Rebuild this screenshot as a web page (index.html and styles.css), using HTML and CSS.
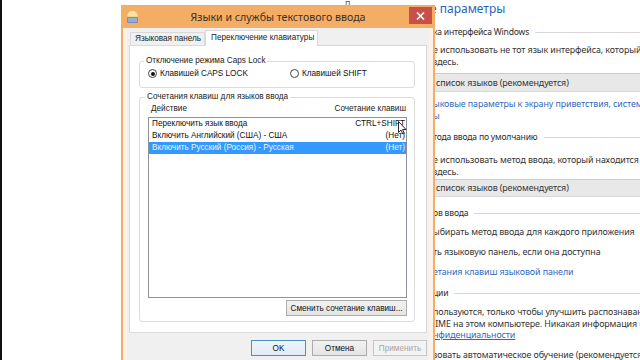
FILE: index.html
```html
<!DOCTYPE html>
<html lang="ru">
<head>
  <meta charset="UTF-8" />
  <title>Языки и службы текстового ввода</title>
  <link rel="stylesheet" href="styles.css">
</head>
<body>
  <div class="page">
    <div class="page-side"><span class="peek">п</span></div>
    <div class="page-main">
      <div class="pg-title">е параметры</div>
      <div class="sec s1"><span>ка интерфейса Windows</span></div>
      <p class="txt p1">е использовать не тот язык интерфейса, который определяется<br>здесь.</p>
      <div class="bar b1">список языков (рекомендуется)</div>
      <p class="link l1">ыковые параметры к экрану приветствия, системным учетным записям<br>ы</p>
      <div class="sec s2"><span>тода ввода по умолчанию</span></div>
      <p class="txt p2">е использовать метод ввода, который находится не первым в списке<br>здесь.</p>
      <div class="bar b2">список языков (рекомендуется)</div>
      <div class="sec s3"><span>ов ввода</span></div>
      <p class="txt c1">ыбирать метод ввода для каждого приложения</p>
      <p class="txt c2">ть языковую панель, если она доступна</p>
      <p class="link c3">етания клавиш языковой панели</p>
      <div class="sec s4"><span>ции</span></div>
      <p class="txt p3">пользуются, только чтобы улучшить распознавание<br>&nbsp;IME на этом компьютере. Никакая информация не<br><a class="ulink">нфиденциальности</a></p>
      <p class="txt p4">зовать автоматическое обучение (рекомендуется)</p>
    </div>
  </div>

  <div class="win">
    <div class="titlebar">
      <svg class="app-icon" width="13" height="14" viewBox="0 0 13 14">
        <circle cx="6.5" cy="6" r="5" fill="#f2d58a"/>
        <path d="M1.5 6a5 5 0 0 1 10 0z" fill="#f7e3a6"/>
        <rect x="1" y="7" width="11" height="6" rx="1" fill="#6f93b8"/>
        <path d="M2 9h9M2 11h9" stroke="#c9d9ea" stroke-width="0.8"/>
      </svg>
      <div class="title">Языки и службы текстового ввода</div>
      <div class="close">
        <svg width="9" height="8" viewBox="0 0 9 8"><path d="M1 0.5L8 7.5M8 0.5L1 7.5" stroke="#fff" stroke-width="1.6"/></svg>
      </div>
    </div>
    <div class="frame">
      <div class="client">
        <div class="tabs">
          <div class="tab">Языковая панель</div>
          <div class="tab active">Переключение клавиатуры</div>
        </div>
        <div class="panel">
          <fieldset class="group g-caps">
            <legend>Отключение режима Caps Lock</legend>
            <div class="radios">
              <label class="radio"><span class="dot on"></span>Клавишей CAPS LOCK</label>
              <label class="radio"><span class="dot"></span>Клавишей SHIFT</label>
            </div>
          </fieldset>
          <fieldset class="group g-keys">
            <legend>Сочетания клавиш для языков ввода</legend>
            <div class="cols"><span>Действие</span><span>Сочетание клавиш</span></div>
            <div class="list">
              <div class="row"><span>Переключить язык ввода</span><span>CTRL+SHIFT</span></div>
              <div class="row"><span>Включить Английский (США) - США</span><span>(Нет)</span></div>
              <div class="row sel"><span>Включить Русский (Россия) - Русская</span><span>(Нет)</span></div>
            </div>
            <div class="btn-row"><button class="btn wide">Сменить сочетание клавиш...</button></div>
          </fieldset>
        </div>
        <div class="actions">
          <button class="btn def">OK</button>
          <button class="btn">Отмена</button>
          <button class="btn" disabled>Применить</button>
        </div>
      </div>
    </div>
  </div>

  <svg class="cursor" width="9" height="14" viewBox="0 0 9 14">
    <path d="M0.5 0.5V11.5L3 9L4.8 13L6.3 12.3L4.6 8.5H8z" fill="#fff" stroke="#111" stroke-width="0.9"/>
  </svg>
</body>
</html>
```

FILE: styles.css
```css
body { margin: 0; width: 640px; height: 360px; overflow: hidden; position: relative; background: #fff; border-left: 2px solid #111; box-sizing: border-box; font-family: "Liberation Sans", Arial, sans-serif; }

/* background control panel page */
.page { display: grid; grid-template-columns: 431px 1fr; height: 100%; }
.page-side { padding-left: 343px; }
.peek { display: block; font-family: "Noto Sans", sans-serif; font-size: 9px; line-height: 5px; color: #555; overflow: hidden; height: 5px; }
.page-main { overflow: hidden; white-space: nowrap; font-family: "Noto Sans", sans-serif; font-size: 8.9px; letter-spacing: -0.1px; color: #333; }
.page-main p { margin: 0; }
.pg-title { font-size: 12px; line-height: 18px; color: #2c63b6; margin-left: -3px; letter-spacing: 0; }
.sec { display: flex; align-items: center; gap: 6px; line-height: 14px; color: #2d2d2d; font-size: 8.6px; letter-spacing: -0.2px; }
.sec::after { content: ""; flex: 1; border-top: 1px solid #d6d6d6; }
.txt { line-height: 12px; }
.link { line-height: 12px; color: #2e6bc0; }
.ulink { color: #2e6bc0; text-decoration: underline; }
.bar { height: 17px; line-height: 17px; background: #e8e8e8; border-top: 1px solid #cbcbcb; border-bottom: 1px solid #d8d8d8; padding-left: 3px; }
.s1 { margin-top: 7px; }
.p1 { margin-top: 5px !important; }
.b1 { margin-top: 5px; }
.l1 { margin-top: 6px !important; }
.s2 { margin-top: 8px; }
.p2 { margin-top: 10px !important; }
.b2 { margin-top: 1px; height: 16px; line-height: 16px; }
.s3 { margin-top: 9px; }
.c1 { margin-top: 6px !important; }
.c2, .c3 { margin-top: 8px !important; }
.s4 { margin-top: 8px; }
.p3 { margin-top: 6px !important; line-height: 11.5px; }
.p4 { margin-top: 8px !important; }

/* dialog window */
.win { position: absolute; left: 119px; top: 5px; width: 314px; height: 360px; background: #f4ad64; }
.titlebar { display: grid; grid-template-columns: 1fr auto 1fr; align-items: center; height: 23px; }
.app-icon { margin-left: 5px; }
.title { font-family: "Noto Sans", sans-serif; font-size: 10.6px; color: #3b2f24; }
.close { justify-self: end; align-self: start; margin: 2px 3px 0 0; width: 23px; height: 17px; background: #c7504b; display: grid; place-items: center; }
.frame { margin: 0 2px; padding: 0 4px; background: #fcf2e8; height: 337px; }
.client { background: #f0f0f0; padding: 2px 2px 0; height: 100%; box-sizing: border-box; font-size: 8.2px; color: #111; }

.tabs { display: flex; align-items: flex-end; height: 16px; padding-left: 1px; margin-bottom: -1px; position: relative; z-index: 1; }
.tab { box-sizing: border-box; height: 14px; width: 75px; border: 1px solid #d9d9d9; background: #f0f0f0; padding-left: 4px; line-height: 12px; color: #222; }
.tab.active { height: 16px; width: 113px; border-bottom: none; background: #fff; padding-left: 5px; line-height: 14px; }

.panel { background: #fff; border: 1px solid #d9d9d9; padding: 9px 11px 10px 9px; }
.group { margin: 0; border: 1px solid #dcdcdc; border-radius: 3px; min-width: 0; }
.group legend { padding: 0 2px; margin-left: -3px; line-height: 12px; color: #222; }
.g-caps { padding: 0 7px 7px; }
.g-keys { margin-top: 3px; padding: 0 7px 5px 8px; }

.radios { display: grid; grid-template-columns: 142px auto; height: 13px; align-items: center; }
.radio { display: flex; align-items: center; gap: 3px; }
.dot { margin-left: 1px; width: 9px; height: 9px; box-sizing: border-box; border: 1px solid #444; border-radius: 50%; background: #fff; display: grid; place-items: center; }
.dot.on::after { content: ""; width: 4px; height: 4px; border-radius: 50%; background: #111; }

.cols { display: flex; justify-content: space-between; line-height: 12px; padding: 0 1px 0 3px; color: #222; }
.list { margin-top: 2px; height: 179px; border: 1px solid #8e9197; background: #fff; }
.row { display: flex; justify-content: space-between; line-height: 12px; padding: 0 1px 0 3px; }
.row.sel { background: #3399ff; color: #eaf4ff; }

.btn-row { display: flex; justify-content: flex-end; margin-top: 2px; }
.btn { font-family: inherit; font-size: 8.2px; height: 16px; width: 55px; padding: 0; border: 1px solid #acacac; background: linear-gradient(#f2f2f2, #e4e4e4); color: #111; }
.btn.wide { width: 121px; }
.btn.def { border-color: #4b8fc9; background: linear-gradient(#eef5fb, #dfebf6); }
.btn:disabled { width: 54px; border-color: #c6c6c6; background: #f3f3f3; color: #a6a6a6; }
.actions { display: flex; justify-content: flex-end; gap: 6px; margin-top: 7px; }

.cursor { position: absolute; left: 396px; top: 121px; }
```
